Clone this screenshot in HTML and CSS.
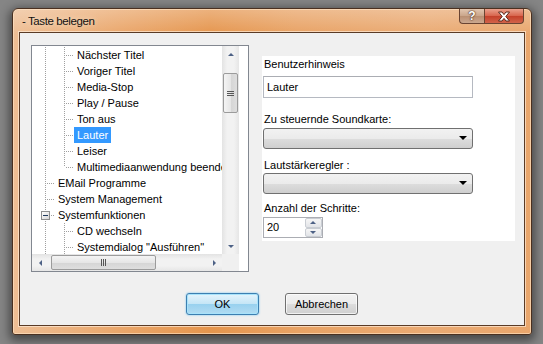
FILE: index.html
```html
<!DOCTYPE html>
<html lang="de">
<head>
    <title>Taste belegen</title>
    <meta charset="utf-8">
    <link rel="stylesheet" href="styles.css">
</head>
<body>
<div class="desk">
    <div class="window">
        <div class="titlebar">
            <span class="title">- Taste belegen</span>
            <div class="caption">
                <span class="cap help">?</span>
                <span class="cap close">
                    <svg width="14" height="11" viewBox="0 0 14 11">
                        <path d="M1.5 1 H5 L7 3.6 L9 1 H12.5 L8.8 5.5 L12.5 10 H9 L7 7.4 L5 10 H1.5 L5.2 5.5 Z" fill="#fff" stroke="#5a2a1e" stroke-width="1" stroke-linejoin="round"/>
                    </svg>
                </span>
            </div>
        </div>
        <div class="client">
            <div class="main">
                <!-- Baum mit den Aktionen -->
                <div class="tree">
                    <div class="tree-view">
                        <div class="rows">
                            <div class="row"><i class="g"></i><i class="t"></i><span class="label">Nächster Titel</span></div>
                            <div class="row"><i class="g"></i><i class="t"></i><span class="label">Voriger Titel</span></div>
                            <div class="row"><i class="g"></i><i class="t"></i><span class="label">Media-Stop</span></div>
                            <div class="row"><i class="g"></i><i class="t"></i><span class="label">Play / Pause</span></div>
                            <div class="row"><i class="g"></i><i class="t"></i><span class="label">Ton aus</span></div>
                            <div class="row"><i class="g"></i><i class="t"></i><span class="label selected">Lauter</span></div>
                            <div class="row"><i class="g"></i><i class="t"></i><span class="label">Leiser</span></div>
                            <div class="row"><i class="g"></i><i class="e"></i><span class="label">Multimediaanwendung beenden</span></div>
                            <div class="row"><i class="t"></i><span class="label">EMail Programme</span></div>
                            <div class="row"><i class="t"></i><span class="label">System Management</span></div>
                            <div class="row"><i class="t"><b class="box"></b></i><span class="label">Systemfunktionen</span></div>
                            <div class="row"><i class="g"></i><i class="t"></i><span class="label">CD wechseln</span></div>
                            <div class="row"><i class="g"></i><i class="t"></i><span class="label">Systemdialog "Ausführen"</span></div>
                        </div>
                        <div class="vscroll">
                            <span class="arrow up"></span>
                            <span class="track"><span class="thumb"><span class="grip"></span></span></span>
                            <span class="arrow down"></span>
                        </div>
                        <div class="filler"></div>
                    </div>
                    <div class="hscroll-row">
                        <div class="hscroll">
                            <span class="arrow left"></span>
                            <span class="track"><span class="thumb"><span class="grip"></span></span></span>
                            <span class="arrow right"></span>
                        </div>
                        <div class="corner"></div>
                        <div class="filler"></div>
                    </div>
                </div>

                <!-- Einstellungen der Aktion -->
                <div class="panel">
                    <div class="field-label first">Benutzerhinweis</div>
                    <div class="textbox">Lauter</div>
                    <div class="field-label gap-l">Zu steuernde Soundkarte:</div>
                    <div class="combo"><span class="drop"></span></div>
                    <div class="field-label gap-m">Lautstärkeregler :</div>
                    <div class="combo tight"><span class="drop"></span></div>
                    <div class="field-label gap-s">Anzahl der Schritte:</div>
                    <div class="spinner">
                        <span class="spin-value">20</span>
                        <span class="spin-btns">
                            <span class="spin up"></span>
                            <span class="spin down"></span>
                        </span>
                    </div>
                </div>
            </div>
            <div class="actions">
                <button class="btn default">OK</button>
                <button class="btn">Abbrechen</button>
            </div>
        </div>
    </div>
</div>
</body>
</html>
```

FILE: styles.css
```css
html, body {
    margin: 0;
    height: 100%;
}
body {
    background: #858585;
    font-family: "Liberation Sans", Arial, sans-serif;
    font-size: 11px;
    color: #000;
    overflow: hidden;
}
.desk {
    padding: 8px 0 0 12px;
}
.window {
    width: 520px;
    height: 327px;
    box-sizing: border-box;
    padding: 0 6px 8px 6px;
    display: flex;
    flex-direction: column;
    border: 1px solid #4a3020;
    border-radius: 6px 6px 3px 3px;
    background:
        linear-gradient(180deg, rgba(255,255,255,.28), rgba(255,255,255,0) 26px),
        linear-gradient(90deg, #eebe94 0%, #eaa76c 20%, #e5954d 38%, #e8a264 55%, #eaaa73 80%, #e9a66c 100%);
    box-shadow: 0 3px 10px 3px rgba(0,0,0,.45), inset 0 0 0 1px rgba(255,230,200,.6);
}
.titlebar {
    height: 23px;
    display: flex;
    align-items: flex-start;
}
.title {
    margin: 6px 0 0 3px;
    font-size: 11.5px;
    letter-spacing: -0.4px;
    color: #111;
    text-shadow: 0 0 6px rgba(255,240,220,.9);
}
.caption {
    margin-left: auto;
    margin-right: 1px;
    display: flex;
}
.cap {
    height: 14px;
    display: flex;
    align-items: center;
    justify-content: center;
    border: 1px solid #6a4432;
    border-top: none;
}
.help {
    width: 24px;
    border-radius: 0 0 0 4px;
    border-right: none;
    background: linear-gradient(180deg, #e2c6b0 0%, #c9a58a 50%, #b98f72 51%, #cba890 100%);
    color: #fff;
    font-weight: bold;
    font-size: 12px;
    text-shadow: 0 0 1px #5a3a2a, 0 0 1px #5a3a2a, 0 0 2px #5a3a2a;
}
.close {
    width: 38px;
    border-radius: 0 0 4px 0;
    background: linear-gradient(180deg, #eaa08c 0%, #d8644c 50%, #c4402a 51%, #d2634a 100%);
}
.client {
    flex: 1;
    display: flex;
    flex-direction: column;
    background: #f0f0f0;
    border: 1px solid #5a3b26;
    box-shadow: 0 0 0 1px rgba(255,235,215,.7);
}
.main {
    display: flex;
    gap: 13px;
    padding: 12px 0 0 11px;
}

/* Baum */
.tree {
    width: 218px;
    height: 227px;
    box-sizing: border-box;
    border: 1px solid #828790;
    background: #fff;
    display: flex;
    flex-direction: column;
}
.tree-view {
    flex: 1;
    display: flex;
    min-height: 0;
}
.rows {
    flex: 1;
    overflow: hidden;
    padding-top: 1px;
}
.filler {
    width: 9px;
    background: #fff;
}
.row {
    display: flex;
    height: 16px;
    white-space: nowrap;
}
.g, .t, .e {
    flex: none;
    position: relative;
}
.g {
    width: 19px;
}
.t, .e {
    width: 23px;
}
.g::before, .t::before, .e::before {
    content: "";
    position: absolute;
    left: 13px;
    top: 0;
    bottom: 0;
    width: 1px;
    background: linear-gradient(#a0a0a0 50%, transparent 50%) 0 0 / 1px 2px;
}
.e::before {
    bottom: 8px;
}
.t::after, .e::after {
    content: "";
    position: absolute;
    left: 14px;
    top: 8px;
    width: 9px;
    height: 1px;
    background: linear-gradient(90deg, transparent 50%, #a0a0a0 50%) 0 0 / 2px 1px;
}
.box {
    position: absolute;
    left: 9px;
    top: 4px;
    width: 9px;
    height: 9px;
    box-sizing: border-box;
    border: 1px solid #8e8f8f;
    background: linear-gradient(135deg, #fff, #d6d6d6);
    z-index: 1;
}
.box::after {
    content: "";
    position: absolute;
    left: 1px;
    top: 3px;
    width: 5px;
    height: 1px;
    background: #1e395b;
}
.label {
    padding: 0 3px;
    line-height: 16px;
}
.selected {
    background: #3399ff;
    color: #fff;
}

/* Scrollbalken */
.vscroll, .hscroll {
    display: flex;
    background: linear-gradient(90deg, #e3e3e3, #f2f2f2 30%, #f2f2f2 70%, #e6e6e6);
}
.vscroll {
    width: 17px;
    flex-direction: column;
}
.hscroll {
    flex: 1;
    background: linear-gradient(180deg, #e3e3e3, #f2f2f2 30%, #f2f2f2 70%, #e6e6e6);
}
.hscroll-row {
    height: 17px;
    display: flex;
}
.corner {
    width: 17px;
    background: #f0f0f0;
}
.arrow {
    flex: none;
    width: 17px;
    height: 17px;
    position: relative;
}
.arrow::after {
    content: "";
    position: absolute;
    left: 50%;
    top: 50%;
    border: 3px solid transparent;
}
.arrow.up::after {
    margin: -5px 0 0 -3px;
    border-bottom: 3px solid #4d6185;
}
.arrow.down::after {
    margin: -1px 0 0 -3px;
    border-top: 3px solid #4d6185;
}
.arrow.left::after {
    margin: -3px 0 0 -5px;
    border-right: 3px solid #4d6185;
}
.arrow.right::after {
    margin: -3px 0 0 -1px;
    border-left: 3px solid #4d6185;
}
.track {
    flex: 1;
    display: flex;
    position: relative;
}
.vscroll .track {
    flex-direction: column;
    padding-top: 10px;
}
.hscroll .track {
    padding-left: 2px;
}
.thumb {
    box-sizing: border-box;
    border: 1px solid #9b9b9b;
    border-radius: 2px;
    display: flex;
    align-items: center;
    justify-content: center;
}
.vscroll .thumb {
    height: 40px;
    margin: 0 1px;
    background: linear-gradient(90deg, #f4f4f4, #e6e6e6 50%, #d5d5d5 51%, #dedede);
}
.hscroll .thumb {
    width: 105px;
    margin: 1px 0;
    background: linear-gradient(180deg, #f4f4f4, #e6e6e6 50%, #d5d5d5 51%, #dedede);
}
.vscroll .grip {
    width: 7px;
    height: 5px;
    background: linear-gradient(#565656 50%, transparent 50%) 0 0 / 7px 2px;
}
.hscroll .grip {
    width: 5px;
    height: 7px;
    background: linear-gradient(90deg, #565656 50%, transparent 50%) 0 0 / 2px 7px;
}

/* Einstellungen */
.panel {
    width: 253px;
    height: 185px;
    margin-top: 11px;
    padding-left: 1px;
    box-sizing: border-box;
    background: #fff;
    display: flex;
    flex-direction: column;
}
.field-label {
    padding-left: 1px;
    line-height: 14px;
}
.first {
    margin-top: 1px;
}
.gap-l {
    margin-top: 14px;
}
.gap-m {
    margin-top: 9px;
}
.gap-s {
    margin-top: 7px;
}
.textbox {
    margin-top: 5px;
    width: 210px;
    height: 22px;
    box-sizing: border-box;
    border: 1px solid #b5b9c1;
    border-top-color: #abadb3;
    padding: 0 3px;
    line-height: 20px;
    background: #fff;
}
.combo {
    margin-top: 2px;
    width: 210px;
    height: 21px;
    box-sizing: border-box;
    border: 1px solid #707070;
    border-radius: 3px;
    background: linear-gradient(180deg, #f2f2f2 0%, #ebebeb 50%, #dddddd 51%, #cfcfcf 100%);
    position: relative;
}
.combo.tight {
    margin-top: 1px;
}
.drop {
    position: absolute;
    right: 5px;
    top: 7px;
    border: 4px solid transparent;
    border-top: 4px solid #000;
}
.spinner {
    margin-top: 2px;
    width: 60px;
    height: 21px;
    box-sizing: border-box;
    border: 1px solid #abadb3;
    display: flex;
    background: #fff;
}
.spin-value {
    flex: 1;
    padding-left: 3px;
    line-height: 19px;
}
.spin-btns {
    width: 17px;
    display: flex;
    flex-direction: column;
}
.spin {
    flex: 1;
    position: relative;
    border: 1px solid #c9cdd3;
    border-radius: 2px;
    background: linear-gradient(180deg, #f6f6f6, #e2e4e8);
}
.spin::after {
    content: "";
    position: absolute;
    left: 4px;
    border: 3px solid transparent;
}
.spin.up::after {
    top: -1px;
    border-bottom: 3px solid #4d6185;
}
.spin.down::after {
    top: 2px;
    border-top: 3px solid #4d6185;
}

/* Schaltflächen */
.actions {
    margin-top: auto;
    display: flex;
    gap: 26px;
    padding: 0 0 10px 166px;
}
.btn {
    width: 73px;
    height: 22px;
    padding: 0;
    font-family: inherit;
    font-size: 11px;
    color: #000;
    border: 1px solid #707070;
    border-radius: 3px;
    background: linear-gradient(180deg, #f2f2f2 0%, #ebebeb 50%, #dddddd 51%, #cfcfcf 100%);
    box-shadow: inset 0 0 0 1px rgba(255,255,255,.7);
}
.btn.default {
    border-color: #3c7fb1;
    background: linear-gradient(180deg, #e5f4fc 0%, #c4e5f6 50%, #98d1ef 51%, #b2dcf2 100%);
    box-shadow: inset 0 0 0 1px #a8e3fb, 0 0 2px #5fbef0;
}
```
